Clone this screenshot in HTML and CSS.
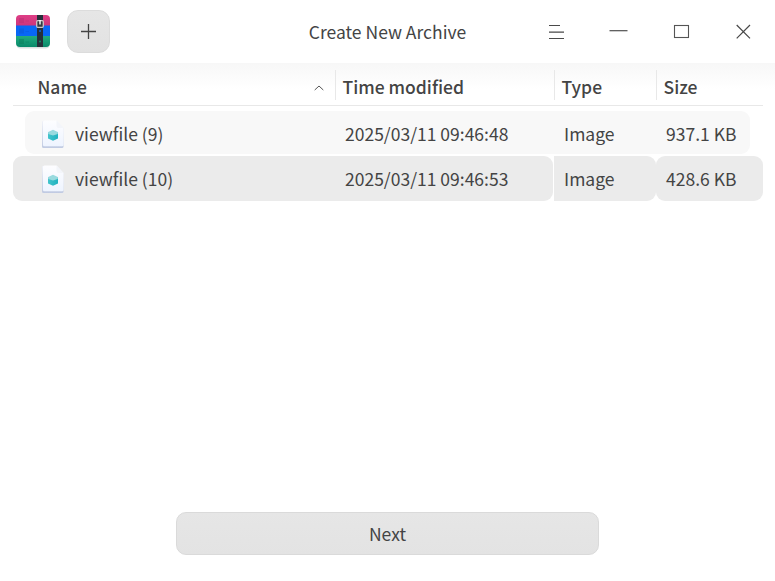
FILE: index.html
```html
<!DOCTYPE html>
<html lang="en">
<head>
<meta charset="utf-8">
<title>Create New Archive</title>
<link rel="stylesheet" href="styles.css">
</head>
<body>
<svg class="defs" width="0" height="0" aria-hidden="true">
  <defs>
    <linearGradient id="paper" x1="0" y1="0" x2="0" y2="1"><stop offset="0" stop-color="#fdfdff"/><stop offset="1" stop-color="#eef4ff"/></linearGradient>
    <linearGradient id="edge" x1="0" y1="0" x2="0" y2="1"><stop offset="0" stop-color="#f0f2f8"/><stop offset="1" stop-color="#c0cae2"/></linearGradient>
    <linearGradient id="cube" x1="0" y1="0" x2="1" y2="0"><stop offset="0" stop-color="#42c4cc"/><stop offset="1" stop-color="#20b2c0"/></linearGradient>
    <symbol id="file" viewBox="0 0 24 28">
      <path d="M2 1H16L22.500 8V26.500Q22.500 28 21 28H2.500Q1 28 1 26.500V2Q1 1 2 1Z" fill="url(#edge)"/>
      <path d="M3.500 .5H15.500L22.500 8V25Q22.500 26.300 21 26.300H3.500Q2 26.300 2 25V2Q2 .5 3.500 .5Z" fill="url(#paper)"/>
      <path d="M15.500 .5V6Q15.500 8 17.500 8H22.500Z" fill="#f3f5fa"/>
      <path d="M7 12.500L12 11L17 12.500V18.500L12 20.800L7 18.500Z" fill="url(#cube)"/>
      <path d="M7.200 12L12 9.800L16.800 12V14L12 15.500L7.200 14Z" fill="#98dadf"/>
    </symbol>
  </defs>
</svg>
<div class="window">
  <header class="titlebar">
    <svg class="logo" width="36" height="36" viewBox="0 0 36 36">
      <defs>
        <clipPath id="tile"><rect x="1" y="1" width="34" height="32" rx="4"/></clipPath>
        <linearGradient id="pink" x1="0" y1="0" x2="0" y2="1"><stop offset="0" stop-color="#df3f87"/><stop offset="1" stop-color="#cd357b"/></linearGradient>
        <linearGradient id="green" x1="0" y1="0" x2="0" y2="1"><stop offset="0" stop-color="#21ac7f"/><stop offset="1" stop-color="#078668"/></linearGradient>
      </defs>
      <rect x="1.500" y="3" width="33" height="31.500" rx="4" fill="#d9e2e0"/>
      <g clip-path="url(#tile)">
        <rect width="36" height="12" fill="url(#pink)"/>
        <rect y="11.500" width="36" height="11" fill="#0867f5"/>
        <rect y="22" width="36" height="12" fill="url(#green)"/>
        <path d="M4 4H9V9H4Z" fill="#b72d71" opacity=".45"/>
        <path d="M4 14.500H9V19.500H4Z" fill="#0757d6" opacity=".5"/>
        <path d="M4 25H9V30H4Z" fill="#087656" opacity=".4"/>
        <path d="M10.500 7H14" stroke="#b72d71" opacity=".4"/>
        <path d="M10.500 17.500H14" stroke="#0757d6" opacity=".4"/>
        <path d="M10.500 28H14" stroke="#087656" opacity=".4"/>
        <rect x="22" width="6" height="36" fill="#26303a"/>
      </g>
      <rect x="21.700" y="6.700" width="6.600" height="6.600" rx="1" fill="#333b42" stroke="#c9c5c7" stroke-width="1.300"/>
      <path d="M25 6V10.500" stroke="#fff" stroke-width="1.400"/>
      <circle cx="25" cy="17" r="1" fill="#0b65d8"/>
      <circle cx="25" cy="27.500" r=".9" fill="#12916d"/>
    </svg>
    <button class="add" aria-label="Add files"><svg width="16" height="16" viewBox="0 0 16 16"><path d="M7.500 0V15M0 7.500H15" stroke="#434343" stroke-width="1.300"/></svg></button>
    <h1 class="title">Create New Archive</h1>
    <div class="controls">
      <svg class="control" viewBox="0 0 62 62"><path d="M14 25.500H25M14 32.200H29M14 38.500H29" stroke="#4a4a4a" stroke-width="1.200"/></svg>
      <svg class="control" viewBox="0 0 62 62"><path d="M12.500 30.700H30.500" stroke="#505050" stroke-width="1.200"/></svg>
      <svg class="control" viewBox="0 0 62 62"><rect x="15.500" y="25.500" width="14" height="12" fill="none" stroke="#555" stroke-width="1.100"/></svg>
      <svg class="control" viewBox="0 0 62 62"><path d="M15.700 25L29 38.300M29 25L15.700 38.300" stroke="#484848" stroke-width="1.200"/></svg>
    </div>
  </header>
  <main class="content">
    <div class="row head">
      <div class="th name">Name<svg class="sort" width="10" height="6" viewBox="0 0 10 6"><path d="M.7 5L5 1L9.300 5" fill="none" stroke="#555"/></svg></div>
      <div class="th">Time modified</div>
      <div class="th">Type</div>
      <div class="th">Size</div>
    </div>
    <div class="row item plain">
      <div class="td name"><svg class="file" width="24" height="28"><use href="#file"/></svg>viewfile (9)</div>
      <div class="td">2025/03/11 09:46:48</div>
      <div class="td">Image</div>
      <div class="td">937.1 KB</div>
    </div>
    <div class="row item hovered">
      <div class="td name"><svg class="file" width="24" height="28"><use href="#file"/></svg>viewfile (10)</div>
      <div class="td time">2025/03/11 09:46:53</div>
      <div class="td type">Image</div>
      <div class="td size">428.6 KB</div>
    </div>
  </main>
  <footer class="footer"><button class="next">Next</button></footer>
</div>
</body>
</html>
```

FILE: styles.css
```css
* {
  box-sizing: border-box;
}

body {
  margin: 0;
  background: #fff;
  color: #444;
  font: 17.5px/26px "Noto Sans CJK SC", "Noto Sans", sans-serif;
}

.defs {
  position: absolute;
}

.window {
  display: flex;
  flex-direction: column;
  height: 581px;
  overflow: hidden;
}

.titlebar {
  display: grid;
  grid-template-columns: 52px 58px 1fr 245px;
  height: 63px;
  align-items: start;
}

.logo {
  margin: 14px 0 0 15px;
}

.add {
  display: flex;
  align-items: center;
  justify-content: center;
  width: 43px;
  height: 43px;
  margin: 10px 0 0 15px;
  padding: 0;
  border: 1px solid #dcdcdc;
  border-radius: 11px;
  background: linear-gradient(#e6e6e6, #e2e2e2);
}

.title {
  margin: 19px 0 0;
  padding-left: 135px;
  text-align: center;
  font-size: 17.5px;
  font-weight: 400;
  white-space: nowrap;
}

.controls {
  display: flex;
  margin-left: 5px;
}

.control {
  width: 62px;
  height: 62px;
  flex: none;
}

.content {
  flex: 1;
  padding: 0 12px 0 13px;
  background: linear-gradient(#f7f7f7, #fff 26px);
}

.row {
  display: grid;
  grid-template-columns: 322px 219px 102px 107px;
}

.head {
  height: 43px;
  padding-top: 7px;
  border-bottom: 1px solid #e8e8e8;
  font-weight: 500;
}

.th {
  height: 30px;
  padding: 4px 0 0 6.5px;
  border-left: 1px solid #e8e8e8;
}

.th.name {
  display: flex;
  justify-content: space-between;
  padding: 4px 11px 0 24.5px;
  border-left: 0;
}

.sort {
  margin-top: 11px;
}

.td {
  display: flex;
  align-items: center;
  padding-left: 10px;
  white-space: nowrap;
}

.td.name {
  padding-left: 28px;
}

.file {
  flex: none;
  margin-right: 10px;
}

.plain {
  grid-template-columns: 310px 219px 102px 94px;
  height: 43px;
  margin: 5px 13px 2px 12px;
  padding-top: 2px;
  border-radius: 9px;
  background: #f8f8f8;
}

.plain .name {
  padding-left: 16px;
}

.hovered {
  height: 45px;
}

.hovered .td {
  background: #ebebeb;
  border-radius: 0 9px 9px 0;
}

.hovered .name {
  border-radius: 9px 0 0 9px;
}

.hovered .time {
  margin-right: 1px;
}

.hovered .size {
  border-radius: 9px;
}

.footer {
  display: flex;
  justify-content: center;
  padding-bottom: 26px;
}

.next {
  width: 423px;
  height: 43px;
  padding: 0;
  border: 1px solid #dadada;
  border-radius: 10px;
  background: linear-gradient(#e6e6e6, #e3e3e3);
  color: #444;
  font: inherit;
}
```
